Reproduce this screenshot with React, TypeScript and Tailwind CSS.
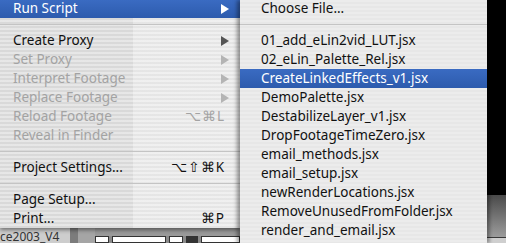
const STRIPES =
  "bg-[repeating-linear-gradient(180deg,rgba(255,255,255,0.3)_0px,rgba(255,255,255,0.3)_2px,rgba(0,0,0,0.015)_2px,rgba(0,0,0,0.015)_4px),linear-gradient(90deg,#dcdcdc_133px,#e9e9e9_133px)]";

type Item = {
  label: string;
  disabled?: boolean;
  arrow?: boolean;
  shortcut?: string;
  active?: boolean;
  sep?: boolean;
};

const MAIN: Item[] = [
  { label: "Run Script", arrow: true, active: true },
  { label: "", sep: true },
  { label: "Create Proxy", arrow: true },
  { label: "Set Proxy", arrow: true, disabled: true },
  { label: "Interpret Footage", arrow: true, disabled: true },
  { label: "Replace Footage", arrow: true, disabled: true },
  { label: "Reload Footage", shortcut: "⌥⌘L", disabled: true },
  { label: "Reveal in Finder", disabled: true },
  { label: "", sep: true },
  { label: "Project Settings...", shortcut: "⌥⇧⌘K" },
  { label: "", sep: true },
  { label: "Page Setup..." },
  { label: "Print...", shortcut: "⌘P" },
];

const SCRIPTS = [
  "01_add_eLin2vid_LUT.jsx",
  "02_eLin_Palette_Rel.jsx",
  "CreateLinkedEffects_v1.jsx",
  "DemoPalette.jsx",
  "DestabilizeLayer_v1.jsx",
  "DropFootageTimeZero.jsx",
  "email_methods.jsx",
  "email_setup.jsx",
  "newRenderLocations.jsx",
  "RemoveUnusedFromFolder.jsx",
  "render_and_email.jsx",
];

function Arrow({ color }: { color: string }) {
  return (
    <svg width="8" height="10" viewBox="0 0 8 10" className="shrink-0">
      <polygon points="0,0 8,5 0,10" fill={color} />
    </svg>
  );
}

function Separator() {
  return (
    <div className="h-[13px] flex items-center">
      <div className="w-full h-px bg-[#c4c4c4]" />
    </div>
  );
}

function MainRow({ item, first }: { item: Item; first: boolean }) {
  if (item.sep) return <Separator />;
  const color = item.active ? "text-white" : item.disabled ? "text-[#a3a3a3]" : "text-[#111]";
  const arrowColor = item.active ? "#ffffff" : item.disabled ? "#b4b4b4" : "#555555";
  return (
    <div
      className={`flex items-center justify-between pl-[13px] ${
        item.arrow ? "pr-[11px]" : "pr-[15px]"
      } ${first ? "h-[18px]" : "h-[19px]"} ${
        item.active ? "bg-[linear-gradient(180deg,#3a6bc2,#2d5bad)]" : ""
      } ${color}`}
    >
      <span>{item.label}</span>
      {item.arrow && <Arrow color={arrowColor} />}
      {item.shortcut && <span className="tracking-[1px]">{item.shortcut}</span>}
    </div>
  );
}

export default function App() {
  return (
    <div className="w-[506px] h-[243px] overflow-hidden flex bg-[#b8b8b8] font-['Noto_Sans',sans-serif] text-[13.5px] leading-none">
      <div className="w-[240px] flex flex-col shrink-0">
        <div className={`h-[228px] ${STRIPES} shadow-[0_2px_4px_rgba(0,0,0,0.45)] relative z-10`}>
          {MAIN.map((item, i) => (
            <MainRow key={i} item={item} first={i === 0} />
          ))}
        </div>
        <div className="flex-1 flex items-stretch bg-[#a8a8a8]">
          <div className="w-[70px] bg-[#cdcdcd] flex items-center text-[#333] text-[12px] pt-[2px] overflow-hidden whitespace-nowrap">
            ce2003_V4
          </div>
          <div className="w-[8px] bg-[#7c7c7c]" />
          <div className="w-[17px] bg-[#a5a5a5]" />
          <div className="flex-1 flex flex-col bg-[#9a9a9a]">
            <div className="h-[8px]" />
            <div className="flex-1 flex gap-[3px] bg-[#8a8a8a]">
              <div className="w-[14px] bg-white border border-[#333]" />
              <div className="w-[54px] bg-white border border-[#333]" />
              <div className="w-[14px] bg-white border border-[#333]" />
              <div className="w-[12px] bg-[#333]" />
              <div className="flex-1 bg-white border border-[#333]" />
            </div>
          </div>
        </div>
      </div>
      <div className="w-[247px] shrink-0 relative z-20 bg-[repeating-linear-gradient(180deg,#ececec_0px,#ececec_2px,#e7e7e7_2px,#e7e7e7_4px)] shadow-[-3px_0_4px_rgba(0,0,0,0.4),3px_0_3px_rgba(0,0,0,0.3)] text-[#111]">
        <div className="h-[18px] flex items-center pl-[21px]">Choose File...</div>
        <Separator />
        {SCRIPTS.map((s, i) => (
          <div
            key={s}
            className={`h-[19px] flex items-center pl-[21px] ${
              i === 2 ? "bg-[linear-gradient(180deg,#3a6bc2,#2d5bad)] text-white" : ""
            }`}
          >
            {s}
          </div>
        ))}
      </div>
      <div className="flex-1 flex flex-col">
        <div className="h-[195px] bg-black" />
        <div className="h-[42px] bg-[linear-gradient(180deg,#4a4a4a,#9c9c9c)]" />
        <div className="h-px bg-[#3a3a3a]" />
        <div className="flex-1 bg-[#cfcfcf]" />
      </div>
    </div>
  );
}
